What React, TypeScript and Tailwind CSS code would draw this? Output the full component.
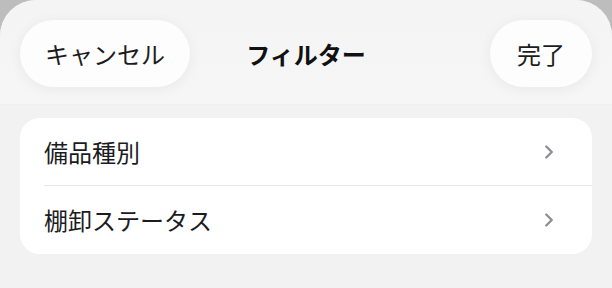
import { ChevronRight } from "lucide-react";

const font = "font-['Noto_Sans_CJK_JP','Noto_Sans',sans-serif]";

function Row({ label, last }: { label: string; last?: boolean }) {
  return (
    <div className="relative flex h-[68px] items-center justify-between pl-6 pr-[32px]">
      <span className="text-[24px] leading-none text-[#1c1c1e]">{label}</span>
      <ChevronRight className="h-[22px] w-[22px] text-[#8e8e94]" strokeWidth={2.6} />
      {!last && <div className="absolute bottom-0 left-6 right-0 h-px bg-[#e6e6ea]" />}
    </div>
  );
}

export default function App() {
  return (
    <div className={`h-[288px] w-[612px] overflow-hidden bg-[#bdbdbd] ${font}`}>
      <div className="flex h-full w-full flex-col rounded-t-[36px] bg-[#f2f2f2]">
        {/* Header */}
        <div className="grid h-[104px] grid-cols-[1fr_auto_1fr] items-start rounded-t-[36px] bg-gradient-to-b from-[#f4f4f4] to-[#f6f6f6] px-5 pt-5 shadow-[0_1px_2px_rgba(0,0,0,0.02)]">
          <div className="flex justify-start">
            <button className="flex h-[67px] items-center rounded-full bg-[#fdfdfd] px-[25px] text-[24px] text-[#1c1c1e] shadow-[0_2px_14px_rgba(0,0,0,0.06)]">
              キャンセル
            </button>
          </div>
          <span className="flex h-[67px] items-center text-[24px] font-bold text-[#111]">フィルター</span>
          <div className="flex justify-end">
            <button className="flex h-[67px] items-center rounded-full bg-[#fdfdfd] px-[27px] text-[24px] text-[#1c1c1e] shadow-[0_2px_14px_rgba(0,0,0,0.06)]">
              完了
            </button>
          </div>
        </div>

        {/* Options */}
        <div className="px-5 pt-[14px]">
          <div className="overflow-hidden rounded-[20px] bg-white">
            <Row label="備品種別" />
            <Row label="棚卸ステータス" last />
          </div>
        </div>
      </div>
    </div>
  );
}
